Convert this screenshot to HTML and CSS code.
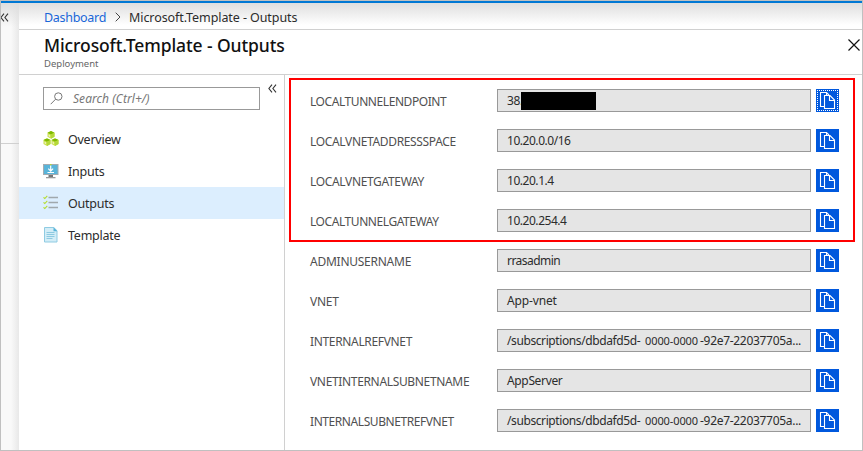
FILE: index.html
```html
<!DOCTYPE html>
<html lang="en">
<head>
<meta charset="utf-8">
<title>Microsoft.Template - Outputs</title>
<link rel="stylesheet" href="styles.css">
</head>
<body>
<svg class="defs" width="0" height="0">
  <symbol id="copy" viewBox="0 0 23 23">
    <g fill="none" stroke="#fff" stroke-width="1.1">
      <path d="M8.500 17.500h-4v-14h6l2.500 2.500"/>
      <path d="M8.500 6.500h5.500l4.500 4.500v8.500h-10z"/>
      <path d="M13.500 6.500v5h5"/>
      <path d="M10.500 3.500v2.500"/>
    </g>
  </symbol>
  <symbol id="collapse" viewBox="0 0 9 9">
    <path d="M4 .7L.9 4.500 4 8.300M8 .7L4.900 4.500 8 8.300" fill="none" stroke="#333" stroke-width="1.100"/>
  </symbol>
  <symbol id="cube" viewBox="0 0 8 8">
    <path d="M4 0l3.500 1.700v4L4 7.800.5 5.700v-4z" fill="#c8e04a"/>
    <path d="M4 0l3.500 1.700L4 3.500.5 1.700z" fill="#7fba00"/>
    <path d="M4 3.500l3.500-1.800v4L4 7.800z" fill="#b4d83a"/>
    <path d="M1.600 3.200l1.300.7v2l-1.300-.7z" fill="#edf5c5"/>
  </symbol>
</svg>
<div class="portal">
  <aside class="rail"><div class="rail-top"><svg class="chev"><use href="#collapse"/></svg></div></aside>
  <div class="blade">
    <nav class="crumbs">
      <a class="crumb-link">Dashboard</a>
      <svg class="crumb-sep" viewBox="0 0 6 10"><path d="M.7.7L5 5 .7 9.300" fill="none" stroke="#444"/></svg>
      <span class="crumb-here">Microsoft.Template - Outputs</span>
    </nav>
    <header class="head">
      <div><h1>Microsoft.Template - Outputs</h1><p>Deployment</p></div>
      <svg class="close" viewBox="0 0 12 12"><path d="M.5.5l11 11M11.500.5l-11 11" fill="none" stroke="#111" stroke-width="1.200"/></svg>
    </header>
    <div class="body">
      <div class="menu">
        <div class="search-row">
          <div class="search">
            <svg class="lens" viewBox="0 0 13 13"><circle cx="8.300" cy="4.500" r="3.700" fill="none" stroke="#777"/><path d="M5.600 7.200L.7 12.200" stroke="#777" fill="none"/></svg>
            <span>Search (Ctrl+/)</span>
          </div>
          <svg class="chev"><use href="#collapse"/></svg>
        </div>
        <ul class="items">
          <li><svg viewBox="0 0 16 16"><use href="#cube" x="4" y="0" width="8" height="8"/><use href="#cube" x="0" y="7.300" width="8" height="8"/><use href="#cube" x="8" y="7.300" width="8" height="8"/></svg><span>Overview</span></li>
          <li><svg viewBox="0 0 16 16"><path d="M0 1h15.500v11H0z" fill="#a5abb0"/><path d="M1 2h13.500v9H1z" fill="#59b4d9"/><path d="M5.500 12h4.500v2H5.500z" fill="#777"/><path d="M3 14h9.500v1.300H3z" fill="#999"/><path d="M7.700 2.500v5.500M5.300 5.700l2.400 2.500 2.400-2.500M4.500 9.500h6.500" fill="none" stroke="#fff" stroke-width="1.200"/><path d="M7 1h1.500v1.200H7z" fill="#b8d432"/></svg><span>Inputs</span></li>
          <li class="on"><svg viewBox="0 0 16 16"><path d="M5.500 2.500H15M5.500 7.500H15M5.500 12.500H15" stroke="#a0a8ad" stroke-width="1.300"/><path d="M.5 2.300l1.300 1.200L4.300.8M.5 7.300l1.300 1.200 2.500-2.700M.5 12.300l1.300 1.200 2.500-2.700" fill="none" stroke="#b4dc30" stroke-width="1.100"/></svg><span>Outputs</span></li>
          <li><svg viewBox="0 0 16 16"><path d="M1.500.5h9.300L14 3.700v11.300H1.500z" fill="#d3edf7" stroke="#8fcbe2"/><path d="M10.500.3v3.900h3.900z" fill="#59b4d9"/><path d="M3.500 5.500h8M3.500 7.500h8M3.500 9.500h8M3.500 11.500h6" stroke="#8dcae1"/></svg><span>Template</span></li>
        </ul>
      </div>
      <main class="outputs">
        <div class="marked">
          <div class="row"><label class="tight">LOCALTUNNELENDPOINT</label><div class="field"><span class="redacted">38.</span><i class="redact"></i></div><button class="copy focus"><svg><use href="#copy"/></svg></button></div>
          <div class="row"><label>LOCALVNETADDRESSSPACE</label><div class="field"><span class="ip">10.20.0.0/16</span></div><button class="copy"><svg><use href="#copy"/></svg></button></div>
          <div class="row"><label>LOCALVNETGATEWAY</label><div class="field"><span class="ip">10.20.1.4</span></div><button class="copy"><svg><use href="#copy"/></svg></button></div>
          <div class="row"><label class="tight">LOCALTUNNELGATEWAY</label><div class="field"><span class="ip">10.20.254.4</span></div><button class="copy"><svg><use href="#copy"/></svg></button></div>
        </div>
        <div class="rest">
          <div class="row"><label class="loose">ADMINUSERNAME</label><div class="field"><span class="user">rrasadmin</span></div><button class="copy"><svg><use href="#copy"/></svg></button></div>
          <div class="row"><label class="loose">VNET</label><div class="field"><span class="vnet">App-vnet</span></div><button class="copy"><svg><use href="#copy"/></svg></button></div>
          <div class="row"><label>INTERNALREFVNET</label><div class="field"><span class="sub">/subscriptions/dbdafd5d-</span><span class="zeros">0000-0000</span><span class="tail">-92e7-22037705a...</span></div><button class="copy"><svg><use href="#copy"/></svg></button></div>
          <div class="row"><label>VNETINTERNALSUBNETNAME</label><div class="field"><span>AppServer</span></div><button class="copy"><svg><use href="#copy"/></svg></button></div>
          <div class="row"><label class="tight">INTERNALSUBNETREFVNET</label><div class="field"><span class="sub">/subscriptions/dbdafd5d-</span><span class="zeros">0000-0000</span><span class="tail">-92e7-22037705a...</span></div><button class="copy"><svg><use href="#copy"/></svg></button></div>
        </div>
      </main>
    </div>
  </div>
</div>
</body>
</html>
```
FILE: styles.css
```css
* { box-sizing: border-box; }
body { margin: 0; font-family: "Noto Sans", "Open Sans", sans-serif; font-size: 12px; color: #2c2c2c; background: #fff; }
.defs { display: block; }
.portal { display: flex; width: 863px; height: 451px; padding-top: 2px; border: 1px solid #c0c0c0; overflow: hidden; white-space: nowrap; background: linear-gradient(#0078d4, #0078d4) 0 0 / 100% 2px no-repeat #fff; }
.rail { flex: none; width: 18px; background: linear-gradient(#dedede, rgba(255, 255, 255, 0)) 0 0 / 100% 24px no-repeat, linear-gradient(90deg, #f9f9f9 55%, #e8e8e8); }
.rail-top { height: 141px; border-bottom: 1px solid #d0d0d0; padding-top: 10px; }
.chev { display: block; width: 9px; height: 9px; flex: none; }
.rail .chev { margin-left: -1px; }
.blade { flex: 1; display: flex; flex-direction: column; background: #fff; }
.crumbs { flex: none; display: flex; align-items: center; height: 27px; padding: 2px 0 0 25px; border-bottom: 1px solid #d0d0d0; background: linear-gradient(#dedede, #fff 85%); }
.crumb-link { color: #1a66d8; width: 71px; font-size: 12.500px; letter-spacing: -.3px; }
.crumb-sep { width: 6px; height: 10px; margin-right: 8px; }
.crumb-here { font-size: 12.500px; letter-spacing: -.08px; }
.head { flex: none; height: 45px; border-bottom: 1px solid #d0d0d0; display: flex; justify-content: space-between; padding: 4px 2px 0 25px; }
h1 { margin: 0; font-size: 17.500px; letter-spacing: -.1px; line-height: 22px; font-weight: 500; color: #111; }
p { margin: 1px 0 0; font-size: 9.500px; line-height: 13px; color: #666; }
.close { width: 12px; height: 12px; margin-top: 5px; }
.body { flex: 1; display: flex; }
.menu { width: 266px; border-right: 1px solid #d0d0d0; }
.search-row { display: flex; gap: 8px; padding: 12px 0 0 24px; height: 48px; }
.search-row .chev { margin-top: -3px; }
.search { width: 217px; height: 23px; border: 1px solid #999; display: flex; align-items: center; padding-left: 6px; color: #777; font-style: italic; letter-spacing: .05px; }
.lens { width: 13px; height: 13px; margin-right: 10px; }
.items { list-style: none; margin: 0; padding: 0; }
.items li { height: 32px; display: flex; align-items: center; padding: 0 0 0 24px; gap: 9px; font-size: 12.500px; letter-spacing: -.25px; }
.items svg { width: 16px; height: 16px; }
.items .on { background: #dceefe; }
.outputs { padding: 3px 0 0 4px; }
.marked { width: 566px; height: 164px; border: 2px solid #f00; padding: 9px 0 0 19px; }
.rest { padding: 7px 0 0 21px; }
.row { display: flex; height: 23px; margin-bottom: 17px; }
.row label { width: 187px; line-height: 25px; color: #505050; letter-spacing: -.34px; }
.row .tight { letter-spacing: -.43px; }
.row .loose { letter-spacing: -.25px; }
.field { width: 314px; height: 23px; border: 1px solid #999; background: #e5e5e5; padding-left: 9px; line-height: 21px; display: flex; align-items: center; letter-spacing: -.35px; }
.redacted { width: 14px; }
.redact { width: 75px; height: 18px; background: #000; }
.ip { letter-spacing: -.46px; }
.user { letter-spacing: -.55px; }
.vnet { letter-spacing: -.15px; }
.sub { width: 138px; letter-spacing: -.4px; }
.zeros { width: 55px; font-size: 11px; letter-spacing: -.1px; }
.tail { letter-spacing: -.3px; }
.copy { width: 23px; height: 23px; margin-left: 5px; padding: 0; border: 0; background: #0058dd; }
.copy svg { display: block; width: 23px; height: 23px; }
.focus { outline: 1px dotted #fff; outline-offset: -2px; }
```
